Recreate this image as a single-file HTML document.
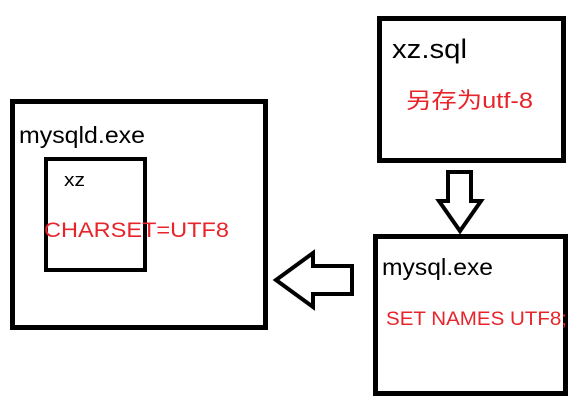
<!DOCTYPE html>
<html><head><style>
html,body{margin:0;padding:0;width:587px;height:418px;background:#fff;overflow:hidden}
svg{display:block}
text{font-family:"Liberation Sans","Noto Sans CJK SC",sans-serif}
</style></head><body>
<svg width="587" height="418" viewBox="0 0 587 418">
<g fill="none" stroke="#000">
<rect x="12.5" y="101.5" width="253" height="226" stroke-width="5"/>
<rect x="46" y="159" width="99" height="111" stroke-width="4"/>
<rect x="379.5" y="18.5" width="184" height="142" stroke-width="5"/>
<rect x="375.5" y="236.5" width="190" height="157" stroke-width="5"/>
<path d="M448 172 H471 V201 H481 L460 231 L439 201 H448 Z" stroke-width="4"/>
<path d="M352 266 H313 V253 L276 280 L313 307 V294 H352 Z" stroke-width="4"/>
</g>
<text x="19" y="143" font-size="23" fill="#000" textLength="126" lengthAdjust="spacingAndGlyphs">mysqld.exe</text>
<text x="64" y="186" font-size="18" fill="#000" textLength="21" lengthAdjust="spacingAndGlyphs">xz</text>
<text x="44" y="237" font-size="21" fill="#e8242b" textLength="185" lengthAdjust="spacingAndGlyphs">CHARSET=UTF8</text>
<text x="392" y="58" font-size="27" fill="#000" textLength="75" lengthAdjust="spacingAndGlyphs">xz.sql</text>
<text x="406" y="108" font-size="22" fill="#e8242b" textLength="127" lengthAdjust="spacingAndGlyphs">另存为utf-8</text>
<text x="382" y="275" font-size="23" fill="#000" textLength="111" lengthAdjust="spacingAndGlyphs">mysql.exe</text>
<text x="386" y="325" font-size="19" fill="#e8242b" textLength="181" lengthAdjust="spacingAndGlyphs">SET NAMES UTF8;</text>
</svg>
</body></html>
